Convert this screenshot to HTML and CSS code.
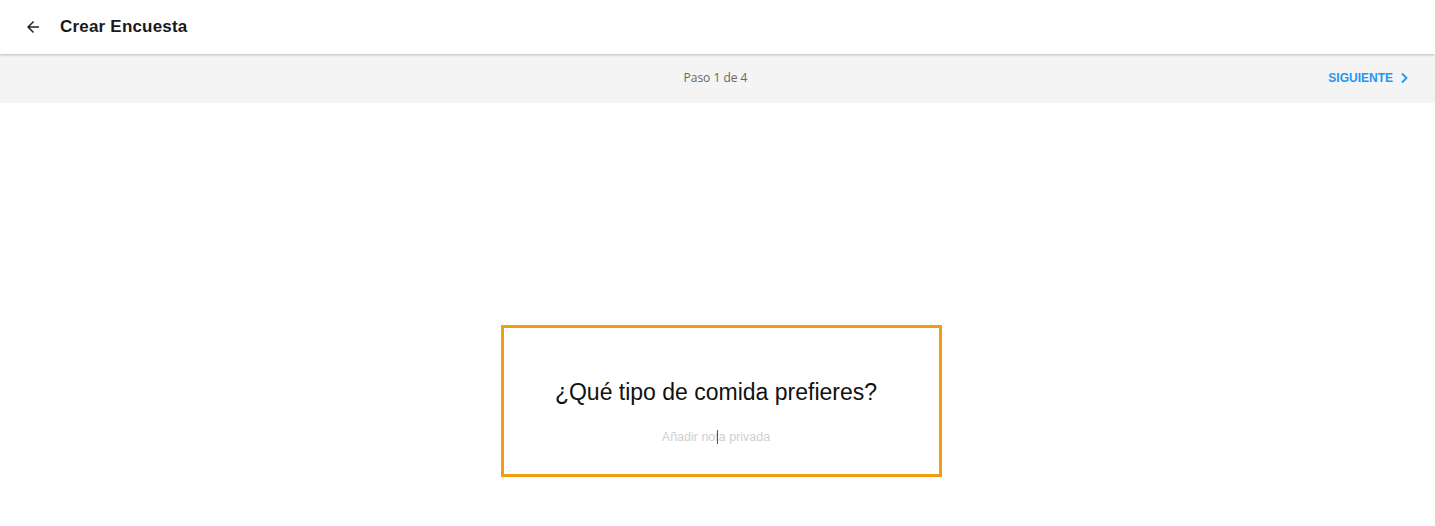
FILE: index.html
```html
<!DOCTYPE html>
<html lang="es">
<head>
<meta charset="utf-8">
<title>Crear Encuesta</title>
<link rel="stylesheet" href="styles.css">
</head>
<body>
<header class="topbar">
  <button class="back" aria-label="Atrás">
    <svg width="18" height="18" viewBox="0 0 24 24"><path d="M20 11H7.83l5.59-5.59L12 4l-8 8 8 8 1.41-1.41L7.83 13H20v-2z" fill="#222"/></svg>
  </button>
  <h1 class="title">Crear Encuesta</h1>
</header>
<nav class="stepbar">
  <div class="step">Paso 1 de 4</div>
  <a class="next" href="#">SIGUIENTE
    <svg width="10" height="12" viewBox="0 0 10 12"><path d="M3 1.5l4.5 4.5L3 10.5" fill="none" stroke="#2196f3" stroke-width="1.8"/></svg>
  </a>
</nav>
<main class="content">
  <section class="card">
    <p class="question">¿Qué tipo de comida prefieres?</p>
    <div class="note">
      <span class="placeholder">Añadir nota privada</span>
      <span class="caret"></span>
    </div>
  </section>
</main>
</body>
</html>
```
FILE: styles.css
```css
html, body {
  margin: 0;
  padding: 0;
  background: #fff;
  font-family: "Liberation Sans", Arial, sans-serif;
}
.topbar {
  height: 54px;
  display: flex;
  align-items: center;
  padding-left: 23px;
  background: #fff;
  box-shadow: 0 1px 2px rgba(0,0,0,0.28);
  position: relative;
  z-index: 1;
}
.back {
  border: 0;
  background: none;
  padding: 0;
  width: 20px;
  height: 20px;
  display: flex;
  align-items: center;
  justify-content: center;
  margin-right: 17px;
}
.title {
  margin: 0;
  font-size: 17px;
  font-weight: bold;
  color: #1a1a1a;
  letter-spacing: 0.2px;
}
.stepbar {
  height: 48px;
  margin-top: 1px;
  background: #f4f4f4;
  display: flex;
  align-items: center;
  justify-content: center;
  position: relative;
}
.step {
  font-family: "Open Sans", sans-serif;
  font-size: 12px;
  color: #666;
  margin-left: -4px;
  margin-top: -3px;
}
.next {
  position: absolute;
  right: 26px;
  top: 0;
  height: 46px;
  display: flex;
  align-items: center;
  gap: 6px;
  font-size: 12px;
  font-weight: bold;
  color: #2196f3;
  text-decoration: none;
  padding-left: 1px;
}
.content {
  display: flex;
  justify-content: center;
  padding-top: 222px;
  padding-left: 7px;
}
.card {
  width: 425px;
  height: 96px;
  border: 3px solid #f39c12;
  display: flex;
  flex-direction: column;
  align-items: center;
  padding-top: 50px;
  padding-right: 10px;
  box-sizing: content-box;
}
.question {
  margin: 0;
  font-size: 23px;
  color: #111;
  line-height: 28px;
  white-space: nowrap;
}
.note {
  position: relative;
  margin-top: 24px;
  font-size: 12.5px;
  color: #cfcfcf;
  line-height: 14px;
}
.caret {
  position: absolute;
  left: 55px;
  top: 0;
  width: 1px;
  height: 14px;
  background: #555;
}
```
